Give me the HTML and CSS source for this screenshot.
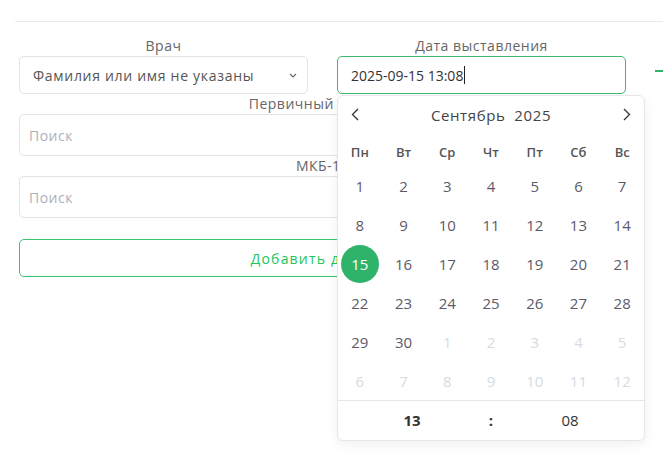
FILE: index.html
```html
<!DOCTYPE html>
<html lang="ru">
<head>
    <meta charset="UTF-8">
    <title>Диагноз</title>
    <link rel="stylesheet" href="styles.css">
</head>
<body>
    <!-- Разделитель -->
    <div class="divider"></div>

    <div class="form">
        <div class="row">
            <div class="field">
                <div class="label">Врач</div>
                <div class="select">
                    <span class="wide">Фамилия или имя не указаны</span>
                    <svg class="chevron" width="8" height="5" viewBox="0 0 8 5"><path d="M1 1l3 3 3-3" fill="none" stroke="#666" stroke-width="1.1"/></svg>
                </div>
            </div>
            <div class="field date-field">
                <div class="label">Дата выставления</div>
                <div class="input active">2025-09-15 13:08<span class="caret"></span></div>

                <!-- Календарь -->
                <div class="calendar">
                    <div class="cal-head">
                        <svg width="8" height="13" viewBox="0 0 8 13"><path d="M7 1L1.5 6.5 7 12" fill="none" stroke="#333" stroke-width="1.3"/></svg>
                        <span class="month">Сентябрь&nbsp; 2025</span>
                        <svg width="8" height="13" viewBox="0 0 8 13"><path d="M1 1l5.5 5.5L1 12" fill="none" stroke="#333" stroke-width="1.3"/></svg>
                    </div>
                    <div class="weekdays">
                        <span>Пн</span><span>Вт</span><span>Ср</span><span>Чт</span><span>Пт</span><span>Сб</span><span>Вс</span>
                    </div>
                    <div class="days" id="days"></div>
                    <div class="time">
                        <span class="hour">13</span>
                        <span class="sep">:</span>
                        <span class="minute">08</span>
                    </div>
                </div>
            </div>
            <div class="dash"></div>
        </div>

        <div class="label">Первичный диагноз</div>
        <div class="input placeholder tall">Поиск</div>

        <div class="label">МКБ-10</div>
        <div class="input placeholder tall">Поиск</div>

        <button class="add-button">Добавить диагноз</button>
    </div>

    <script>
        const days = document.getElementById("days");
        let html = "";
        for (let i = 1; i <= 42; i++) {
            let num = i <= 30 ? i : i - 30;
            let cls = "day";
            if (i > 30) cls += " other";
            if (i === 15) cls += " selected";
            html += '<span class="' + cls + '"><i>' + num + '</i></span>';
        }
        days.innerHTML = html;
    </script>
</body>
</html>
```

FILE: styles.css
```css
* {
    margin: 0;
    padding: 0;
    box-sizing: border-box;
}

html,
body {
    min-height: 100%;
}

body {
    font-family: "Open Sans", "DejaVu Sans", sans-serif;
    font-size: 14px;
    color: #555;
    background: #fff;
    min-height: 467px;
    overflow: hidden;
}

.divider {
    margin: 21px 0 0 15px;
    border-top: 1px solid #e9e9ee;
}

.form {
    width: 626px;
    padding: 15px 0 0 19px;
}

.row {
    display: flex;
    gap: 29px;
}

.field {
    width: 289px;
    flex-shrink: 0;
}

.date-field {
    position: relative;
}

.label {
    text-align: center;
    line-height: 18px;
    height: 18px;
    margin-bottom: 1px;
    color: #666;
    letter-spacing: 0.5px;
}

.wide {
    letter-spacing: 0.7px;
}

.select,
.input {
    height: 38px;
    border: 1px solid #e2e2e6;
    border-radius: 5px;
    display: flex;
    align-items: center;
    padding: 0 14px 0 13px;
    color: #555;
    background: #fff;
}

.select {
    justify-content: space-between;
    padding-right: 10px;
}

.input.active {
    border-color: #3cb96e;
    color: #333;
}

.caret {
    width: 1px;
    height: 18px;
    background: #222;
    margin-left: 1px;
}

.input.tall {
    height: 42px;
    margin-bottom: 1px;
    padding-left: 9px;
}

.placeholder {
    color: #aeb0b8;
    letter-spacing: 0.5px;
}

.form > .label {
    margin-top: 1px;
}

.dash {
    width: 10px;
    height: 2px;
    background: #2fb36b;
    margin-top: 33px;
    flex-shrink: 0;
}

/* Кнопка */
.add-button {
    display: block;
    width: 100%;
    height: 38px;
    margin-top: 21px;
    border: 1px solid #3cc36f;
    border-radius: 5px;
    background: #fff;
    color: #23c45e;
    font-family: inherit;
    font-size: 14px;
    letter-spacing: 1.2px;
}

/* Календарь */
.calendar {
    position: absolute;
    top: 58px;
    left: 0;
    width: 308px;
    background: #fff;
    border: 1px solid #e6e6ea;
    border-radius: 6px;
    box-shadow: 0 4px 12px rgba(0, 0, 0, 0.06);
    z-index: 10;
}

.cal-head {
    height: 37px;
    display: flex;
    align-items: center;
    justify-content: space-between;
    padding: 0 13px 0 13px;
}

.month {
    font-size: 15px;
    color: #444;
    letter-spacing: 0.6px;
}

.weekdays,
.days {
    display: grid;
    grid-template-columns: repeat(7, 1fr);
    text-align: center;
}

.weekdays {
    height: 28px;
    margin-top: 5px;
    line-height: 28px;
    font-size: 13px;
    font-weight: 600;
    color: #555;
}

.day {
    height: 39px;
    display: flex;
    align-items: center;
    justify-content: center;
    color: #5c5a68;
    font-size: 15px;
}

.day i {
    font-style: normal;
    width: 38px;
    height: 38px;
    line-height: 38px;
    border-radius: 50%;
}

.day.other {
    color: #d6dbe3;
}

.day.selected i {
    background: #2fb36b;
    color: #fff;
}

.time {
    height: 40px;
    padding-bottom: 1px;
    border-top: 1px solid #e6e6ea;
    display: flex;
    justify-content: center;
    align-items: center;
    color: #333;
    font-size: 15px;
}

.hour,
.minute {
    width: 40px;
    text-align: center;
}

.hour {
    font-weight: 700;
}

.sep {
    width: 118px;
    text-align: center;
    font-weight: 700;
}
```
